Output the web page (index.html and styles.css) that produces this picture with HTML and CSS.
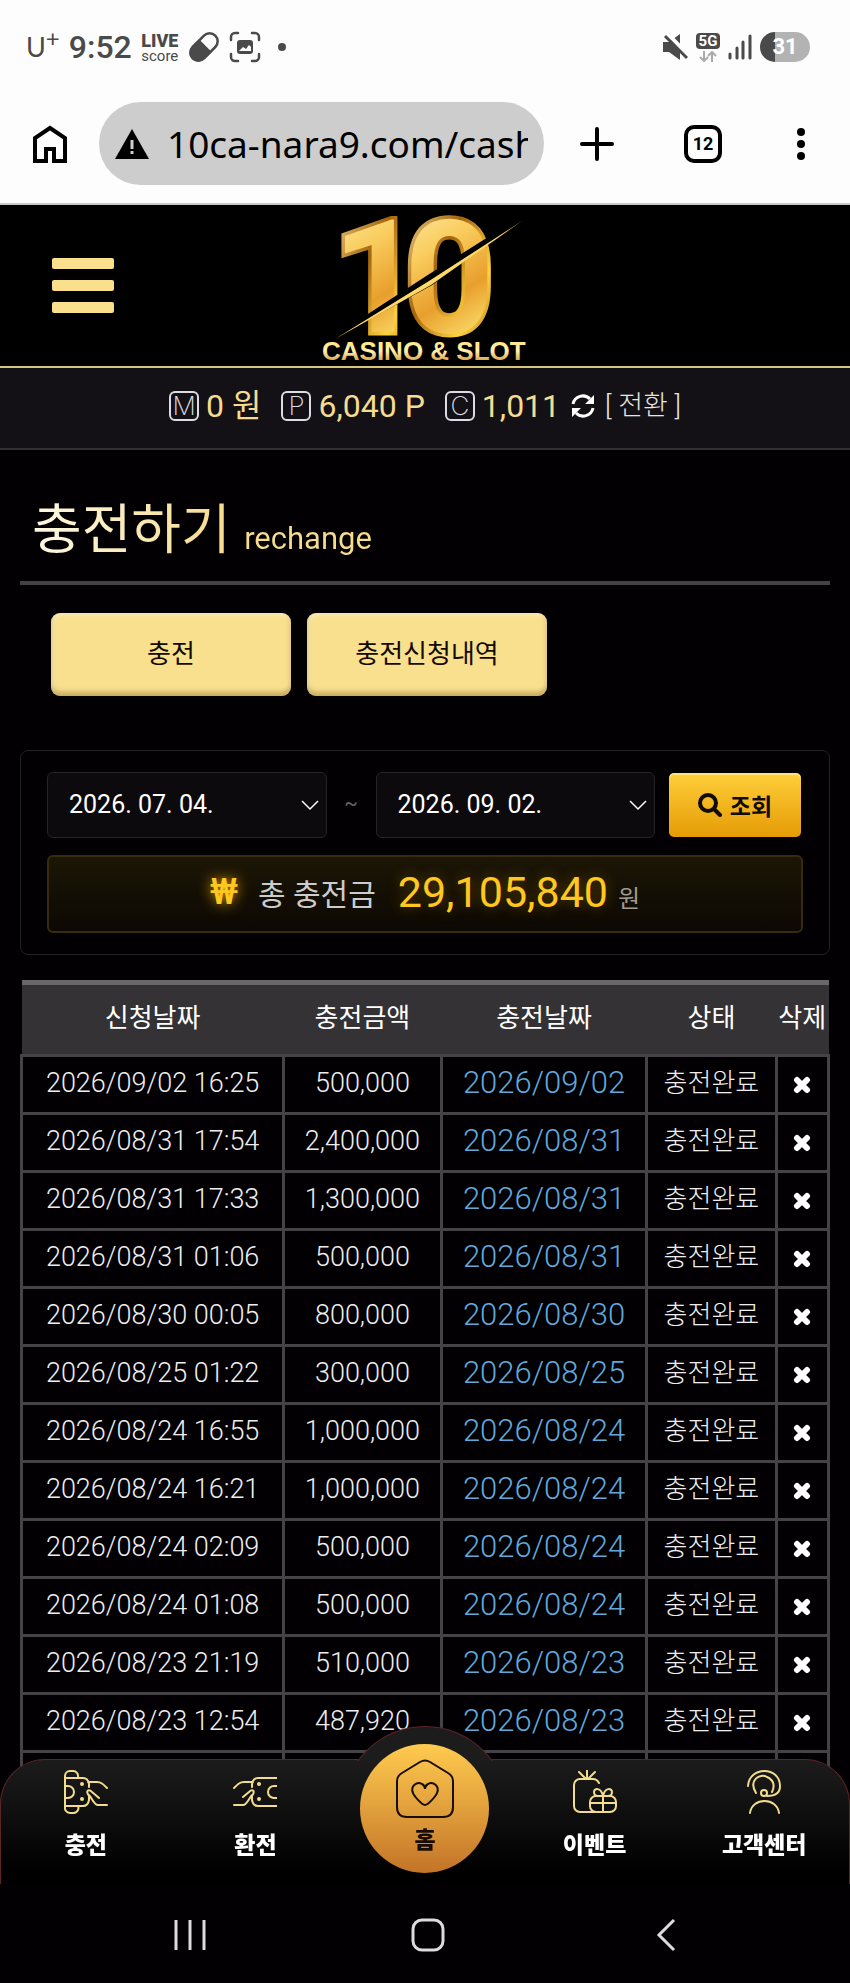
FILE: index.html
```html
<!DOCTYPE html>
<html lang="ko">
<head>
  <meta charset="UTF-8" />
  <meta name="viewport" content="width=device-width, initial-scale=1" />
  <title>충전하기</title>
  <link rel="stylesheet" href="styles.css">
</head>
<body>
  <!-- status bar -->
  <div class="status-bar">
    <div class="status-left">
      <span class="carrier">U<sup>+</sup></span>
      <span class="clock">9:52</span>
      <span class="live-score"><b>LIVE</b><span>score</span></span>
      <svg width="32" height="32" viewBox="0 0 32 32">
        <g transform="rotate(-45 16 16)">
          <rect x="0" y="8" width="32" height="16" rx="8" fill="none" stroke="#4a4a4a" stroke-width="2.5"/>
          <path d="M17 8H8a8 8 0 0 0 0 16h9z" fill="#4a4a4a" stroke="#4a4a4a" stroke-width="2"/>
        </g>
      </svg>
      <svg width="32" height="32" viewBox="0 0 32 32">
        <path d="M2 9V6a4 4 0 0 1 4-4h3M23 2h3a4 4 0 0 1 4 4v3M30 23v3a4 4 0 0 1-4 4h-3M9 30H6a4 4 0 0 1-4-4v-3" fill="none" stroke="#4a4a4a" stroke-width="2.5" stroke-linecap="round"/>
        <rect x="8" y="9" width="16" height="14" rx="3" fill="#4a4a4a"/>
        <path d="M10 20l4-4 3 2 3-4 2 2v4z" fill="#fff"/>
      </svg>
      <span class="more-dot"></span>
    </div>
    <div class="status-right">
      <svg width="26" height="28" viewBox="0 0 26 28">
        <path d="M1 9h6l11-8v26l-11-8H1z" fill="#4a4a4a"/>
        <path d="M5 0l22 23" stroke="#fdfdfd" stroke-width="4"/>
        <path d="M3 3l22 22" stroke="#4a4a4a" stroke-width="3"/>
      </svg>
      <div class="network">
        <b>5G</b>
        <svg width="18" height="11" viewBox="0 0 18 11"><path d="M5 0v10M1 6l4 4 4-4M13 11V1M9 5l4-4 4 4" fill="none" stroke="#aaa" stroke-width="2"/></svg>
      </div>
      <svg width="24" height="26" viewBox="0 0 24 26">
        <path d="M2 20v4M9 14v10M15 8v16M22 2v22" stroke="#4a4a4a" stroke-width="3" stroke-linecap="round"/>
      </svg>
      <span class="battery">31</span>
    </div>
  </div>

  <!-- browser toolbar -->
  <div class="toolbar">
    <button class="tool-btn" aria-label="Home">
      <svg width="34" height="38" viewBox="0 0 34 38"><path d="M2 36V13L17 3l15 10v23H21V24h-8v12z" fill="none" stroke="#000" stroke-width="4"/></svg>
    </button>
    <div class="url-bar">
      <svg width="34" height="30" viewBox="0 0 34 30"><path d="M17 0l17 30H0z"/><path d="M17 11v9M17 22v3" stroke="#cdcdcd" stroke-width="3"/></svg>
      <input type="text" class="url-input" value="10ca-nara9.com/cash" aria-label="URL">
    </div>
    <div class="tool-group">
      <button class="tool-btn" aria-label="New tab">
        <svg width="34" height="34" viewBox="0 0 34 34"><path d="M17 2v30M2 17h30" stroke="#000" stroke-width="4" stroke-linecap="round"/></svg>
      </button>
      <button class="tool-btn tabs-btn">12</button>
      <button class="tool-btn" aria-label="Menu">
        <svg width="18" height="34" viewBox="0 0 18 34"><circle cx="9" cy="5" r="4"/><circle cx="9" cy="17" r="4"/><circle cx="9" cy="29" r="4"/></svg>
      </button>
    </div>
  </div>

  <header class="header">
    <button class="hamburger" aria-label="메뉴"><span></span><span></span><span></span></button>
    <a href="#" class="logo">
      <svg width="204" height="156" viewBox="0 0 204 156">
        <defs>
          <linearGradient id="gold" x1="0" y1="0" x2="0.3" y2="1">
            <stop offset="0" stop-color="#fff3bd"/>
            <stop offset="0.4" stop-color="#f9cd5e"/>
            <stop offset="0.7" stop-color="#e89f2c"/>
            <stop offset="1" stop-color="#ffe774"/>
          </linearGradient>
          <linearGradient id="edge" x1="0" y1="0" x2="1" y2="1">
            <stop offset="0" stop-color="#ffe9a0"/>
            <stop offset="0.4" stop-color="#a5640c"/>
            <stop offset="0.7" stop-color="#ffd23c"/>
            <stop offset="1" stop-color="#a35c08"/>
          </linearGradient>
          <linearGradient id="name" x1="0" y1="0" x2="0" y2="1">
            <stop offset="0" stop-color="#ffe26b"/>
            <stop offset="0.5" stop-color="#fff0b0"/>
            <stop offset="1" stop-color="#c97812"/>
          </linearGradient>
        </defs>
        <g class="logo-num" fill="url(#gold)" stroke="url(#edge)">
          <text x="9" y="124">1</text>
          <text x="81" y="124">0</text>
        </g>
        <path d="M20 124L106 68 192 14 108 76z" fill="#000" stroke="#000" stroke-width="3"/>
        <path d="M12 131L106 73 199 13 108 77z" fill="#ffd968"/>
        <text class="logo-name" x="-1" y="152" fill="url(#name)">CASINO &amp; SLOT</text>
      </svg>
    </a>
  </header>

  <div class="points">
    <span class="point"><i>M</i>0 원</span>
    <span class="point"><i>P</i>6,040 P</span>
    <span class="point"><i>C</i>1,011</span>
    <a href="#" class="convert">
      <svg width="26" height="26" viewBox="0 0 26 26">
        <path d="M3 11a10 10 0 0 1 17-5M23 15a10 10 0 0 1-17 5" fill="none" stroke="#fff" stroke-width="3"/>
        <path d="M24 2v9h-9zM2 24v-9h9z" fill="#fff"/>
      </svg>
      [ 전환 ]
    </a>
  </div>

  <main class="content">
    <h1 class="page-title">충전하기 <small>rechange</small></h1>

    <div class="tab-buttons">
      <button>충전</button>
      <button>충전신청내역</button>
    </div>

    <section class="filter">
      <div class="filter-row">
        <div class="date-box">
          <select aria-label="시작일"><option>2026. 07. 04.</option></select>
          <svg width="18" height="11" viewBox="0 0 18 11"><path d="M1 1l8 8 8-8" fill="none" stroke="#fff" stroke-width="1.5"/></svg>
        </div>
        <span class="tilde">~</span>
        <div class="date-box">
          <select aria-label="종료일"><option>2026. 09. 02.</option></select>
          <svg width="18" height="11" viewBox="0 0 18 11"><path d="M1 1l8 8 8-8" fill="none" stroke="#fff" stroke-width="1.5"/></svg>
        </div>
        <button class="search-btn">
          <svg width="24" height="24" viewBox="0 0 24 24"><circle cx="10" cy="10" r="8" fill="none" stroke="#120c00" stroke-width="4"/><path d="M16 16l6 6" stroke="#120c00" stroke-width="4" stroke-linecap="round"/></svg>
          조회
        </button>
      </div>
      <div class="total">
        <span class="won">₩</span>
        <span class="total-label">총 충전금</span>
        <strong>29,105,840</strong>
        <span class="unit">원</span>
      </div>
    </section>

    <table class="history">
      <colgroup>
        <col class="col-date"><col class="col-amount"><col class="col-done"><col class="col-state"><col class="col-del">
      </colgroup>
      <thead>
        <tr><th>신청날짜</th><th>충전금액</th><th>충전날짜</th><th>상태</th><th>삭제</th></tr>
      </thead>
      <tbody id="rows"></tbody>
    </table>
  </main>

  <div class="bottom">
    <nav class="tab-bar">
      <a href="#">
        <svg width="44" height="44" viewBox="0 0 44 44"><path d="M1 37V6a5 5 0 0 1 5-5h3a5 5 0 0 1 5 6M1 37a5 5 0 0 0 5 6h3a5 5 0 0 0 5-7M1 8h18q5 0 6 6v3M1 36h18q5 0 6-6v-4M1 16h3a6 6 0 0 1 0 12H1M24 12h9c4 0 6 2 10 6M25 26c-4-6 0-7 3-4l7 6M25 25c3 3 5 10 9 10h9"/><circle cx="18" cy="14" r="1"/><circle cx="18" cy="29" r="1"/></svg>
        충전
      </a>
      <a href="#">
        <svg width="44" height="44" viewBox="0 0 44 44"><path d="M44 8H25q-5 0-6 6v3M44 36H25q-5 0-6-6v-4M44 16h-3a6 6 0 0 0 0 12h3M20 12h-9c-4 0-6 2-10 6M19 26c4-6 0-7-3-4l-6 5M19 25c-3 3-5 10-9 10H1"/><circle cx="26" cy="14" r="1"/><circle cx="26" cy="29" r="1"/></svg>
        환전
      </a>
      <a href="#" class="home">
        <span class="home-circle">
          <svg width="60" height="60" viewBox="0 0 60 60"><path d="M25 3q5-3 10 0l18 11q5 3 5 8v26q0 10-10 10H12Q2 58 2 48V22q0-5 5-8z"/><path d="M30 46c-3 0-11-9-12-12-3-7 4-12 9-9 2 1 3 3 3 5 0-2 1-4 3-5 5-3 12 2 9 9-1 3-9 12-12 12z"/></svg>
          홈
        </span>
      </a>
      <a href="#">
        <svg width="44" height="44" viewBox="0 0 44 44"><path d="M14 9V0M13 9L6 2M15 9l7-7M26 13q-2-4-6-4H7a6 6 0 0 0-6 6v21a6 6 0 0 0 6 6h16M23 26h14a6 6 0 0 1 6 6v4a6 6 0 0 1-6 6H23a6 6 0 0 1-6-6v-4a6 6 0 0 1 6-6zM30 26v16M17 33h26M30 26c-2-9-9-8-9-4q0 4 4 4M30 26c2-9 9-8 9-4q0 4-4 4"/></svg>
        이벤트
      </a>
      <a href="#">
        <svg width="44" height="44" viewBox="-6 0 44 44"><path d="M0 16C1-4 32-4 32 16q0 10-13 10M8 23C0 10 12 3 19 7c7 3 8 9 5 15M2 43c2-16 27-16 29 0"/><circle cx="16" cy="23" r="3"/></svg>
        고객센터
      </a>
    </nav>
    <div class="system-nav">
      <button aria-label="Recent apps"><svg width="34" height="34" viewBox="0 0 34 34"><path d="M3 2v30M17 2v30M31 2v30" fill="none" stroke="#dcdcdc" stroke-width="3"/></svg></button>
      <button aria-label="Home"><svg width="34" height="34" viewBox="0 0 34 34"><rect x="2" y="2" width="30" height="30" rx="9" fill="none" stroke="#dcdcdc" stroke-width="3"/></svg></button>
      <button aria-label="Back"><svg width="34" height="34" viewBox="0 0 34 34"><path d="M25 2L10 17l15 15" fill="none" stroke="#dcdcdc" stroke-width="3"/></svg></button>
    </div>
  </div>

  <script>
    const items = [
      ["2026/09/02 16:25", "500,000"],
      ["2026/08/31 17:54", "2,400,000"],
      ["2026/08/31 17:33", "1,300,000"],
      ["2026/08/31 01:06", "500,000"],
      ["2026/08/30 00:05", "800,000"],
      ["2026/08/25 01:22", "300,000"],
      ["2026/08/24 16:55", "1,000,000"],
      ["2026/08/24 16:21", "1,000,000"],
      ["2026/08/24 02:09", "500,000"],
      ["2026/08/24 01:08", "500,000"],
      ["2026/08/23 21:19", "510,000"],
      ["2026/08/23 12:54", "487,920"]
    ];
    const cross = '<svg width="18" height="18" viewBox="0 0 18 18"><path d="M4 4l10 10M14 4L4 14" stroke="#fff" stroke-width="6" stroke-linecap="round"/></svg>';

    document.getElementById("rows").innerHTML = items.map(([date, amount]) => `
      <tr>
        <td>${date}</td>
        <td>${amount}</td>
        <td class="done">${date.split(" ")[0]}</td>
        <td class="state">충전완료</td>
        <td><button class="del-btn" aria-label="삭제">${cross}</button></td>
      </tr>`).join("") + "<tr><td></td><td></td><td></td><td></td><td></td></tr>";
  </script>
</body>
</html>
```
FILE: styles.css
```css
* {
  box-sizing: border-box;
}
body {
  margin: 0;
  min-height: 100vh;
  background: #020003;
  color: #fff;
  font-family: Roboto, "Noto Sans CJK KR", sans-serif;
}
button {
  border: none;
  padding: 0;
  background: none;
  font-family: inherit;
  cursor: pointer;
}
a {
  color: inherit;
  text-decoration: none;
}
svg {
  display: block;
  flex: none;
}

/* status bar */
.status-bar {
  display: flex;
  justify-content: space-between;
  align-items: center;
  height: 94px;
  padding: 0 40px 0 26px;
  background: #fdfdfd;
  color: #4a4a4a;
}
.status-left,
.status-right {
  display: flex;
  align-items: center;
}
.status-left {
  gap: 9px;
}
.status-right {
  gap: 8px;
}
.carrier {
  font-family: Lato, sans-serif;
  font-size: 27px;
  line-height: 28px;
}
.carrier sup {
  font-size: 24px;
  line-height: 0;
}
.clock {
  font-size: 32px;
  font-weight: 500;
}
.live-score {
  display: flex;
  flex-direction: column;
  align-items: center;
  width: 38px;
  font-size: 15px;
  line-height: 12px;
}
.live-score b {
  font-family: Roboto, sans-serif;
  font-size: 18px;
  font-weight: 900;
  line-height: 18px;
}
.more-dot {
  width: 8px;
  height: 8px;
  margin-left: 8px;
  border-radius: 50%;
  background: #4a4a4a;
}
.network {
  display: flex;
  flex-direction: column;
  align-items: center;
  gap: 2px;
}
.network b {
  width: 24px;
  border-radius: 4px;
  background: #4a4a4a;
  color: #fff;
  font-size: 15px;
  line-height: 16px;
  text-align: center;
}
.battery {
  width: 50px;
  border-radius: 15px;
  background: linear-gradient(90deg, #4a4a4a 30%, #b3b3b3 30%);
  color: #fff;
  font-size: 22px;
  font-weight: 700;
  line-height: 30px;
  text-align: center;
}

/* browser toolbar */
.toolbar {
  display: flex;
  align-items: center;
  gap: 32px;
  height: 111px;
  padding: 0 40px 10px 33px;
  border-bottom: 2px solid #c8c8cc;
  background: #fdfdfd;
}
.tool-btn {
  color: #000;
}
.url-bar {
  display: flex;
  flex: 1;
  align-items: center;
  gap: 18px;
  min-width: 0;
  height: 83px;
  padding: 0 16px;
  border-radius: 42px;
  background: #cdcdcd;
}
.url-input {
  flex: 1;
  min-width: 0;
  border: none;
  padding: 0;
  outline: none;
  background: none;
  color: #000;
  font-family: "Noto Sans", sans-serif;
  font-size: 37px;
}
.tool-group {
  display: flex;
  align-items: center;
  justify-content: space-between;
  width: 31%;
  max-width: 230px;
  margin-left: 4px;
}
.tabs-btn {
  width: 38px;
  height: 38px;
  border: 4px solid #000;
  border-radius: 10px;
  font-size: 18px;
  font-weight: 700;
}

/* site header */
.header {
  display: flex;
  align-items: center;
  justify-content: center;
  position: relative;
  height: 163px;
  border-bottom: 2px solid #d9c67e;
  background: #000;
}
.hamburger {
  position: absolute;
  left: 52px;
  display: flex;
  flex-direction: column;
  gap: 11px;
  width: 62px;
}
.hamburger span {
  height: 11px;
  border-radius: 2px;
  background: #fae08c;
}
.logo svg {
  overflow: visible;
}
.logo-num {
  font-size: 158px;
  font-weight: 700;
  paint-order: stroke;
  stroke-width: 7px;
}
.logo-name {
  font-family: "Liberation Sans", sans-serif;
  font-size: 26px;
  font-weight: 700;
}

/* balance */
.points {
  display: flex;
  align-items: center;
  justify-content: center;
  gap: 20px;
  height: 82px;
  padding-bottom: 4px;
  border-bottom: 2px solid #303033;
  background: #131115;
  color: #f6dc8f;
  font-size: 32px;
  line-height: 36px;
}
.point {
  display: flex;
  align-items: center;
  gap: 7px;
}
.point i {
  width: 30px;
  height: 30px;
  border: 2px solid #dcdce4;
  border-radius: 6px;
  color: #dcdce4;
  font-family: Inter, sans-serif;
  font-size: 26px;
  font-style: normal;
  font-weight: 200;
  line-height: 26px;
  text-align: center;
}
.convert {
  display: flex;
  align-items: center;
  gap: 9px;
  margin-left: -10px;
  color: #e6e6e6;
  font-size: 27px;
  font-weight: 300;
}

/* page */
.content {
  padding: 0 20px;
}
.page-title {
  margin: 0;
  padding: 41px 12px 10px;
  border-bottom: 4px solid #444246;
  background: linear-gradient(90deg, #fffbe8, #f6dc8f 25%) text;
  color: transparent;
  font-size: 54px;
  font-weight: 400;
  line-height: 80px;
}
.page-title small {
  font-size: 31px;
  line-height: 36px;
}
.tab-buttons {
  display: flex;
  gap: 16px;
  padding: 28px 31px 54px;
}
.tab-buttons button {
  width: 240px;
  height: 83px;
  padding-bottom: 6px;
  border-radius: 9px;
  background: #f9e08f;
  box-shadow: inset 0 -4px 5px rgba(120, 90, 20, 0.4), inset 2px 2px 5px rgba(255, 255, 255, 0.4);
  color: #150a00;
  font-size: 26px;
}

/* date filter */
.filter {
  padding: 21px 26px;
  border: 1px solid #222124;
  border-radius: 8px;
}
.filter-row {
  display: flex;
  align-items: center;
  padding-right: 2px;
}
.date-box {
  display: grid;
  flex: 1;
  align-items: center;
}
.date-box select,
.date-box svg {
  grid-area: 1 / 1;
}
.date-box svg {
  justify-self: end;
  margin-right: 8px;
  pointer-events: none;
}
.date-box select {
  appearance: none;
  width: 100%;
  height: 66px;
  padding: 0 21px 2px;
  border: 1px solid #252428;
  border-radius: 6px;
  background: #0c0a0d;
  color: #fff;
  font-family: inherit;
  font-size: 25px;
}
.tilde {
  width: 49px;
  padding-bottom: 4px;
  color: #666;
  font-size: 20px;
  text-align: center;
}
.search-btn {
  display: flex;
  align-items: center;
  justify-content: center;
  gap: 8px;
  width: 132px;
  height: 64px;
  margin-left: 14px;
  border-radius: 5px;
  background: linear-gradient(#ffcf3a, #e59b05);
  box-shadow: inset 0 2px 1px rgba(255, 255, 255, 0.4);
  color: #120c00;
  font-size: 23px;
  font-weight: 700;
}
.total {
  display: flex;
  align-items: center;
  justify-content: center;
  height: 78px;
  margin-top: 17px;
  padding-bottom: 4px;
  border: 2px solid #382b0c;
  border-radius: 6px;
  background: linear-gradient(#1c1606, #0c0803);
}
.won {
  margin-right: 20px;
  color: #ffc81e;
  font-size: 36px;
  font-weight: 500;
  text-shadow: 0 0 14px #d99a00;
}
.total-label {
  margin-right: 22px;
  color: #ccc;
  font-size: 30px;
}
.total strong {
  margin-right: 10px;
  color: #ffc81e;
  font-size: 43px;
  font-weight: 400;
  text-shadow: 0 0 14px rgba(217, 154, 0, 0.4);
}
.unit {
  padding-top: 8px;
  color: #a09a90;
  font-size: 24px;
}

/* history */
.history {
  width: 100%;
  margin-top: 25px;
  border-collapse: collapse;
  table-layout: fixed;
}
.col-date { width: 32.5%; }
.col-amount { width: 19.5%; }
.col-done { width: 25.5%; }
.col-state { width: 16%; }
.col-del { width: 6.5%; }
.history th {
  height: 73px;
  padding: 0 0 8px;
  border-top: 5px solid #6a676a;
  background: #343235;
  font-size: 26px;
  font-weight: 400;
  white-space: nowrap;
}
.history td {
  height: 58px;
  padding: 0 0 4px;
  border: 3px solid #454347;
  color: #eee;
  font-size: 27px;
  font-weight: 300;
  line-height: 36px;
  text-align: center;
  white-space: nowrap;
}
.history td.done {
  color: #5fa8dc;
  font-size: 31px;
}
.history td.state {
  font-size: 26px;
}
.del-btn {
  display: block;
  margin: 4px auto 0;
}

/* bottom menus */
.bottom {
  position: fixed;
  right: 0;
  bottom: 0;
  left: 0;
}
.tab-bar {
  display: grid;
  grid-template-columns: repeat(5, 1fr);
  position: relative;
  height: 125px;
  border: 1px solid #5c2329;
  border-bottom: none;
  border-radius: 45px 45px 0 0;
  background: linear-gradient(#1b1c1b, #000 90%);
}
/* round bump behind the home button, only its cap shows above the bar */
.tab-bar::before {
  content: "";
  position: absolute;
  top: -33px;
  left: 50%;
  width: 164px;
  height: 164px;
  border-radius: 50%;
  background: #1b1c1b;
  box-shadow: 0 0 0 1px #5c2329;
  clip-path: inset(-2px -2px 130px);
  transform: translateX(-50%);
}
.tab-bar a {
  display: flex;
  flex-direction: column;
  align-items: center;
  gap: 14px;
  position: relative;
  padding-top: 10px;
  font-size: 23px;
  font-weight: 900;
  line-height: 36px;
}
.tab-bar svg {
  fill: none;
  stroke: #f4dc8e;
  stroke-width: 2;
  stroke-linecap: round;
}
.tab-bar .home {
  padding: 0;
}
.home-circle {
  display: flex;
  flex-direction: column;
  align-items: center;
  gap: 4px;
  width: 129px;
  height: 129px;
  margin-top: -16px;
  padding-top: 15px;
  border-radius: 50%;
  background: linear-gradient(#ffcb4f, #c37428);
  color: #180c04;
}
.home-circle svg {
  stroke: #180c04;
}
.system-nav {
  display: flex;
  align-items: center;
  justify-content: space-between;
  height: 99px;
  padding: 2px 167px 0 173px;
  background: #020003;
}
```
